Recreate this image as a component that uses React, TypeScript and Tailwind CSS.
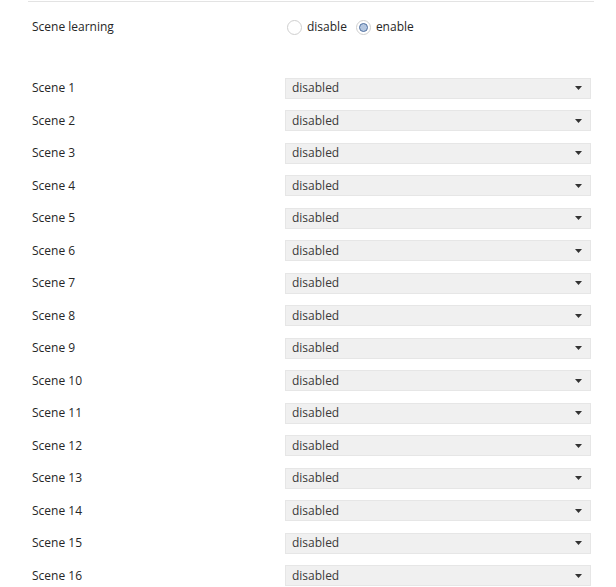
const scenes = Array.from({ length: 16 }, (_, i) => `Scene ${i + 1}`);

function Radio({ checked }: { checked?: boolean }) {
  return (
    <span className="w-[15px] h-[15px] rounded-full border border-[#cfcfcf] bg-white flex items-center justify-center">
      {checked && <span className="w-[9px] h-[9px] rounded-full border border-[#4f6f9f] bg-[#b4c6df]" />}
    </span>
  );
}

function Select() {
  return (
    <div className="w-[306px] h-[21px] bg-[#f0f0f0] border border-[#e6e6e6] flex items-center justify-between pl-[6px] pr-[8px] text-[#3a3a3a]">
      <span>disabled</span>
      <svg width="7" height="4" viewBox="0 0 7 4">
        <path d="M0 0 H7 L3.5 4 Z" fill="#333" />
      </svg>
    </div>
  );
}

export default function App() {
  return (
    <div className="w-[616px] h-[587px] bg-white overflow-hidden text-[12px] text-[#262626]" style={{ fontFamily: '"Open Sans", "Noto Sans", sans-serif' }}>
      <div className="ml-[28px] w-[566px] mt-[1px] border-t border-[#e3e3e3]" />
      <div className="flex items-center h-[50px] pl-[32px]">
        <span className="w-[255px]">Scene learning</span>
        <div className="flex items-center">
          <Radio />
          <span className="ml-[5px]">disable</span>
          <span className="ml-[9px]"><Radio checked /></span>
          <span className="ml-[5px]">enable</span>
        </div>
      </div>
      <div className="h-[20px]" />
      <div className="flex flex-col pl-[32px]">
        {scenes.map((s) => (
          <div key={s} className="flex items-center h-[32.5px]">
            <span className="w-[253px]">{s}</span>
            <Select />
          </div>
        ))}
      </div>
    </div>
  );
}
